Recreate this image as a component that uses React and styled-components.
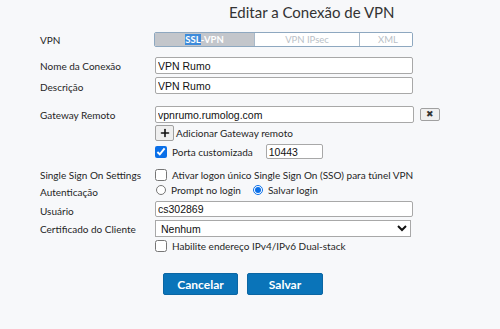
import React from 'react'
import styled, { createGlobalStyle } from 'styled-components'
import { Plus } from 'lucide-react'

const GlobalStyle = createGlobalStyle`
  body {
    margin: 0;
    background: #f7f8fa;
    font-family: Lato, 'Liberation Sans', sans-serif;
    color: #2b2b2b;
  }
`

const Page = styled.div`
  width: 500px;
  height: 329px;
  overflow: hidden;
`

const Title = styled.h1`
  margin: 0;
  padding: 2px 0 0 229px;
  height: 28px;
  font-size: 15px;
  font-weight: 400;
  color: #333;
  line-height: 20px;
`

const Form = styled.form`
  padding-left: 40px;
`

const Row = styled.div`
  display: flex;
  align-items: center;
  height: ${(p) => p.$h || 17}px;
  margin-top: ${(p) => p.$mt || 0}px;
`

const Label = styled.label`
  flex: 0 0 115px;
  font-size: 10px;
  color: #1f1f1f;
  white-space: nowrap;
  position: relative;
  top: ${(p) => p.$dy || 0}px;
`

const Control = styled.div`
  display: flex;
  align-items: center;
  gap: ${(p) => p.$gap || 0}px;
  height: 100%;
`

const Segmented = styled.div`
  display: flex;
  width: 259px;
  height: 15px;
  box-sizing: border-box;
  border: 1px solid #8ea8c0;
  border-radius: 2px;
  overflow: hidden;
  margin-left: -1px;
`

const Segment = styled.div`
  flex: 0 0 ${(p) => p.$w}px;
  display: flex;
  align-items: center;
  justify-content: center;
  font-size: 9.5px;
  font-weight: ${(p) => (p.$active ? 700 : 400)};
  color: ${(p) => (p.$active ? '#fff' : '#b9bfc7')};
  background: ${(p) => (p.$active ? '#c3c6cb' : '#fff')};
  & + & {
    border-left: 1px solid #a9b9c8;
  }
`

const Selected = styled.span`
  background: #3d8bdb;
  color: #fff;
`

const TextInput = styled.input`
  box-sizing: border-box;
  width: ${(p) => p.$w || 258}px;
  height: ${(p) => p.$h || 17}px;
  border: 1px solid #a8a8a8;
  border-radius: 2px;
  background: #fff;
  padding: 0 2px;
  font-family: 'Liberation Sans', Arial, sans-serif;
  font-size: 10.5px;
  color: #111;
  outline: none;
`

const Select = styled.select`
  box-sizing: border-box;
  width: 256px;
  height: 17px;
  border: 1px solid #a8a8a8;
  border-radius: 0;
  background: #fff;
  padding: 0 0 0 1px;
  font-family: 'Liberation Sans', Arial, sans-serif;
  font-size: 10.5px;
  color: #111;
  outline: none;
`

const IconButton = styled.button`
  box-sizing: border-box;
  display: flex;
  align-items: center;
  justify-content: center;
  width: ${(p) => p.$w}px;
  height: ${(p) => p.$h}px;
  padding: 0;
  border: 1px solid #a0a0a0;
  border-radius: 2px;
  background: #efefef;
  color: #111;
`

const Cross = styled.span`
  font-size: 9px;
  line-height: 1;
  color: #333;
`

const Check = styled.input`
  margin: 0;
  width: 12px;
  height: 12px;
  accent-color: #0a6fe8;
`

const Radio = styled.input`
  margin: 0 0 0 1px;
  width: 10px;
  height: 10px;
  accent-color: #0a6fe8;
`

const OptionText = styled.span`
  font-size: 10px;
  color: #1f1f1f;
  white-space: nowrap;
  margin-left: ${(p) => p.$ml || 5}px;
  margin-right: ${(p) => p.$mr || 0}px;
`

const Actions = styled.div`
  display: flex;
  gap: 9px;
  margin: 21px 0 0 123px;
`

const PrimaryButton = styled.button`
  width: ${(p) => p.$w}px;
  height: 22px;
  border: 1px solid #0b66a3;
  border-radius: 2px;
  background: #0a74b9;
  color: #fff;
  font-family: Lato, 'Liberation Sans', sans-serif;
  font-size: 12px;
  font-weight: 700;
`

export default function App() {
  return (
    <Page>
      <GlobalStyle />
      <Title>Editar a Conexão de VPN</Title>
      <Form onSubmit={(e) => e.preventDefault()}>
        <Row $h={15} $mt={2}>
          <Label>VPN</Label>
          <Segmented>
            <Segment $w={99} $active>
              <Selected>SSL</Selected>-VPN
            </Segment>
            <Segment $w={104}>VPN IPsec</Segment>
            <Segment $w={56}>XML</Segment>
          </Segmented>
        </Row>

        <Row $mt={10}>
          <Label>Nome da Conexão</Label>
          <TextInput defaultValue="VPN Rumo" />
        </Row>
        <Row $mt={3}>
          <Label $dy={1}>Descrição</Label>
          <TextInput defaultValue="VPN Rumo" />
        </Row>

        <Row $mt={12}>
          <Label>Gateway Remoto</Label>
          <Control $gap={6}>
            <TextInput defaultValue="vpnrumo.rumolog.com" $w={259} />
            <IconButton type="button" $w={20} $h={13}>
              <Cross>✖</Cross>
            </IconButton>
          </Control>
        </Row>
        <Row $h={16} $mt={2}>
          <Label />
          <Control>
            <IconButton type="button" $w={19} $h={16}>
              <Plus size={12} strokeWidth={3.2} />
            </IconButton>
            <OptionText $ml={2}>Adicionar Gateway remoto</OptionText>
          </Control>
        </Row>
        <Row $h={15} $mt={3}>
          <Label />
          <Control>
            <Check type="checkbox" defaultChecked />
            <OptionText $mr={13}>Porta customizada</OptionText>
            <TextInput defaultValue="10443" $w={57} $h={15} />
          </Control>
        </Row>

        <Row $h={13} $mt={9}>
          <Label>Single Sign On Settings</Label>
          <Control>
            <Check type="checkbox" />
            <OptionText>Ativar logon único Single Sign On (SSO) para túnel VPN</OptionText>
          </Control>
        </Row>
        <Row $h={12} $mt={3}>
          <Label $dy={2}>Autenticação</Label>
          <Control>
            <Radio type="radio" name="auth" />
            <OptionText $mr={11}>Prompt no login</OptionText>
            <Radio type="radio" name="auth" defaultChecked />
            <OptionText>Salvar login</OptionText>
          </Control>
        </Row>
        <Row $h={16} $mt={5}>
          <Label $dy={2}>Usuário</Label>
          <TextInput defaultValue="cs302869" $h={16} />
        </Row>
        <Row $mt={3}>
          <Label>Certificado do Cliente</Label>
          <Select defaultValue="nenhum">
            <option value="nenhum">Nenhum</option>
          </Select>
        </Row>
        <Row $h={13} $mt={2}>
          <Label />
          <Control>
            <Check type="checkbox" />
            <OptionText>Habilite endereço IPv4/IPv6 Dual-stack</OptionText>
          </Control>
        </Row>

        <Actions>
          <PrimaryButton type="button" $w={75}>Cancelar</PrimaryButton>
          <PrimaryButton type="submit" $w={76}>Salvar</PrimaryButton>
        </Actions>
      </Form>
    </Page>
  )
}
